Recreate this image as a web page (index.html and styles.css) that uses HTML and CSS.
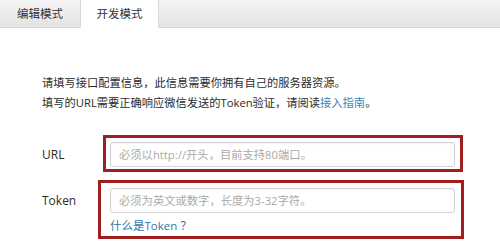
FILE: index.html
```html
<!DOCTYPE html>
<html lang="zh-CN">
<head>
<meta charset="utf-8">
<title>开发模式</title>
<link rel="stylesheet" href="styles.css">
</head>
<body>
<div class="tabs">
  <div class="tab">编辑模式</div>
  <div class="tab active">开发模式</div>
</div>
<div class="content">
  <p class="intro">请填写接口配置信息，此信息需要你拥有自己的服务器资源。<br>填写的URL需要正确响应微信发送的Token验证，请阅读<a class="link" href="#">接入指南</a>。</p>
  <div class="row row-url">
    <label class="label">URL</label>
    <div class="mark mark-url">
      <input class="input" type="text" placeholder="必须以http://开头，目前支持80端口。">
    </div>
  </div>
  <div class="row row-token">
    <label class="label">Token</label>
    <div class="mark mark-token">
      <input class="input" type="text" placeholder="必须为英文或数字，长度为3-32字符。">
      <a class="help" href="#">什么是Token ？</a>
    </div>
  </div>
</div>
</body>
</html>
```
FILE: styles.css
```css
html, body {
  margin: 0;
  padding: 0;
  background: #ffffff;
}
body {
  width: 500px;
  height: 248px;
  overflow: hidden;
  font-family: "Open Sans", "Noto Sans CJK SC", sans-serif;
  color: #333;
}
.tabs {
  display: flex;
  height: 27px;
  background: linear-gradient(#f4f4f4, #e3e3e3);
  border-bottom: 1px solid #d6d6d6;
}
.tab {
  width: 80px;
  line-height: 28px;
  text-align: center;
  font-size: 11.5px;
  color: #333;
  box-sizing: border-box;
}
.tab.active {
  width: 79px;
  height: 28px;
  background: #fff;
  border-left: 1px solid #d9d9d9;
  border-right: 1px solid #d9d9d9;
}
.content {
  padding-left: 42px;
}
.intro {
  margin: 45px 0 0 0;
  font-size: 11.25px;
  line-height: 20px;
  color: #2b2b2b;
}
.link {
  color: #3a86bb;
  text-decoration: none;
}
.row {
  display: flex;
  align-items: flex-start;
}
.row-url {
  margin-top: 22px;
}
.row-token {
  margin-top: 8px;
}
.label {
  width: 61px;
  font-size: 12px;
  line-height: 25px;
  color: #2b2b2b;
}
.row-url .label {
  margin-top: 7px;
}
.row-token .label {
  margin-top: 8px;
}
.mark {
  border: 3px solid #a11e1f;
  box-sizing: border-box;
  display: flex;
  flex-direction: column;
}
.mark-url {
  width: 360px;
  padding: 4px 5px 2px 4px;
}
.mark-token {
  width: 366px;
  margin-left: -5px;
  padding: 5px 6px 0 9px;
}
.input {
  box-sizing: border-box;
  height: 25px;
  width: 345px;
  margin: 0;
  border: 1px solid #d3d3d3;
  border-radius: 3px;
  padding: 0 8px;
  font-family: "Open Sans", "Noto Sans CJK SC", sans-serif;
  font-size: 11.3px;
  color: #333;
  background: #fff;
  box-shadow: inset 0 1px 1px rgba(0,0,0,0.04);
  outline: none;
}
.input::placeholder {
  color: #aaaaaa;
}
.help {
  margin-top: 3px;
  font-size: 11.5px;
  line-height: 20px;
  color: #2f7aa8;
  text-decoration: none;
}
```
